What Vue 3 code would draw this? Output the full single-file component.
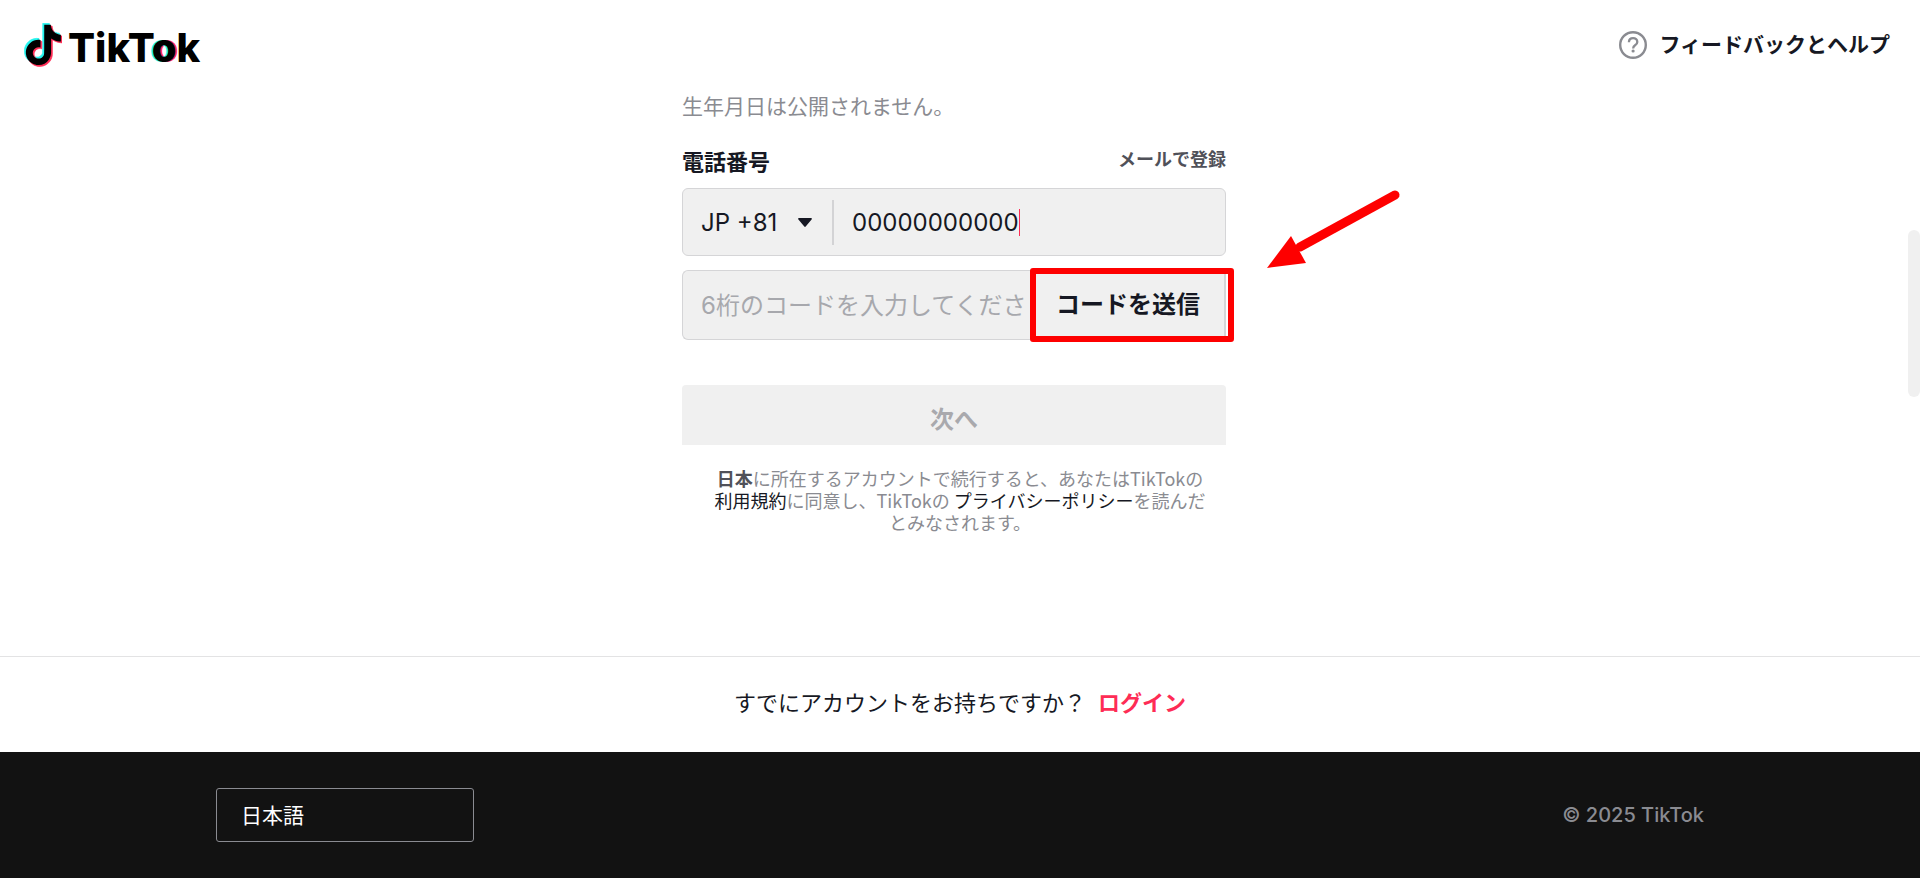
<script setup>
import { computed, ref } from 'vue'

const phone = ref('00000000000')
const code = ref('')
const country = ref('JP +81')
const language = ref('ja')
const phoneWidth = computed(() => `${Math.max(phone.value.length, 1)}ch`)

const notePath =
  'M12.525.02c1.31-.02 2.61-.01 3.91-.02.08 1.53.63 3.09 1.75 4.17 1.12 1.11 2.7 1.62 4.24 1.79v4.03c-1.44-.05-2.89-.35-4.2-.97-.57-.26-1.1-.59-1.62-.93-.01 2.92.01 5.84-.02 8.75-.08 1.4-.54 2.79-1.35 3.94-1.31 1.92-3.58 3.17-5.91 3.21-1.43.08-2.86-.31-4.08-1.03-2.02-1.19-3.44-3.37-3.65-5.71-.02-.5-.03-1-.01-1.49.18-1.9 1.12-3.72 2.58-4.96 1.66-1.44 3.98-2.13 6.15-1.72.02 1.48-.04 2.96-.04 4.44-.99-.32-2.15-.23-3.02.37-.63.41-1.11 1.04-1.36 1.75-.21.51-.15 1.07-.14 1.61.24 1.64 1.82 3.02 3.5 2.87 1.12-.01 2.19-.66 2.77-1.61.19-.33.4-.67.41-1.06.1-1.79.06-3.57.07-5.36.01-4.03-.01-8.05.02-12.07z'
</script>

<template>
  <div class="page">
    <header class="header">
      <a class="logo" href="#" aria-label="TikTok">
        <svg class="note" viewBox="0 0 38 44" aria-hidden="true">
          <path :d="notePath" fill="#25f4ee" stroke="#25f4ee" stroke-width=".4" transform="translate(-2.300 .3) scale(1.680)" />
          <path :d="notePath" fill="#fe2c55" stroke="#fe2c55" stroke-width=".4" transform="translate(.5 3.100) scale(1.680)" />
          <path :d="notePath" fill="#000" transform="translate(-.8 1.800) scale(1.680)" />
        </svg>
        <span class="wordmark">TikT<span class="wordmark-o">o</span>k</span>
      </a>
      <a class="help" href="#">
        <svg class="help-icon" viewBox="0 0 28 28" fill="none" aria-hidden="true">
          <circle cx="14" cy="14" r="12.8" stroke="#8a8b91" stroke-width="2.4" />
          <path d="M9.9 11.2c.1-2.4 1.8-4 4.2-4s4.200 1.500 4.200 3.700c0 1.500-.8 2.400-2.200 3.400-1.300.9-1.900 1.500-1.900 2.900v.3" stroke="#8a8b91" stroke-width="2.300" />
          <circle cx="14.100" cy="20" r="1.600" fill="#8a8b91" />
        </svg>
        <span>フィードバックとヘルプ</span>
      </a>
    </header>

    <main class="main">
      <form class="form" @submit.prevent>
        <p class="hint">生年月日は公開されません。</p>
        <div class="title-row">
          <label class="title" for="phone">電話番号</label>
          <a class="switch" href="#">メールで登録</a>
        </div>

        <div class="field">
          <div class="country">
            <select v-model="country" class="country-select" aria-label="国コード">
              <option>JP +81</option>
            </select>
            <svg class="caret-down" viewBox="0 0 14 9" aria-hidden="true">
              <path d="M1 0h12c.9 0 1.200.9.6 1.500L7.700 8.600c-.4.4-1 .4-1.400 0L.4 1.500C-.2.900.1 0 1 0z" fill="#161823" />
            </svg>
          </div>
          <span class="divider"></span>
          <input id="phone" v-model="phone" class="phone" :style="{ width: phoneWidth }" type="tel" />
          <span class="cursor"></span>
        </div>

        <div class="code-row">
          <input v-model="code" class="code" type="text" placeholder="6桁のコードを入力してください" aria-label="6桁のコード" />
          <button class="send" type="button">コードを送信</button>
          <span class="highlight"></span>
          <svg class="arrow" viewBox="0 0 136 82" aria-hidden="true">
            <path d="M129 8L34 60" stroke="#fe0000" stroke-width="9" stroke-linecap="round" />
            <path d="M1 81L25 49L40 76z" fill="#fe0000" />
          </svg>
        </div>

        <button class="next" type="submit" disabled>次へ</button>

        <p class="terms">
          <b>日本</b>に所在するアカウントで続行すると、あなたはTikTokの<a href="#">利用規約</a>に同意し、TikTokの <a href="#">プライバシーポリシー</a>を読んだとみなされます。
        </p>
      </form>
      <span class="scroll-thumb"></span>
    </main>

    <section class="login">
      <span>すでにアカウントをお持ちですか？</span>
      <a href="#">ログイン</a>
    </section>

    <footer class="footer">
      <div class="footer-inner">
        <select v-model="language" class="language" aria-label="言語">
          <option value="ja">日本語</option>
        </select>
        <span class="copyright">© 2025 TikTok</span>
      </div>
    </footer>
  </div>
</template>

<style>
body {
  margin: 0;
}
</style>

<style scoped>
* {
  box-sizing: border-box;
}
.page {
  display: flex;
  flex-direction: column;
  min-height: 100vh;
  background: #fff;
  color: #161823;
  font-family: Inter, 'Noto Sans CJK JP', sans-serif;
  font-size: 22px;
}
a {
  color: inherit;
  text-decoration: none;
}
input,
select,
button {
  margin: 0;
  padding: 0;
  border: 0;
  outline: 0;
  background: none;
  color: inherit;
  font-family: inherit;
  font-size: 24px;
  appearance: none;
}
.header {
  display: flex;
  align-items: center;
  justify-content: space-between;
  height: 90px;
  padding: 0 30px 0 24px;
}
.logo {
  display: flex;
  align-items: center;
  gap: 6px;
}
.note {
  width: 38px;
  height: 44px;
}
.wordmark {
  padding-top: 6px;
  color: #000;
  font-family: Inter, sans-serif;
  font-size: 40px;
  font-weight: 800;
  line-height: 48px;
}
.wordmark-o {
  text-shadow: -2px 0 #25f4ee, 2px 0 #fe2c55;
}
.help {
  display: flex;
  align-items: center;
  gap: 12px;
  font-size: 21px;
  font-weight: 700;
  line-height: 32px;
}
.help-icon {
  width: 28px;
  height: 28px;
}
.main {
  position: relative;
  flex: 1;
  padding: 2px 12px 48px 0;
}
.form {
  width: 544px;
  max-width: 100%;
  margin: 0 auto;
}
.hint {
  margin: 0 0 24px;
  color: #8a8b91;
  font-size: 21px;
  line-height: 30px;
}
.title-row {
  display: flex;
  align-items: flex-start;
  justify-content: space-between;
  margin-bottom: 10px;
}
.title {
  font-weight: 700;
  line-height: 32px;
}
.switch {
  color: #505159;
  font-size: 18px;
  font-weight: 700;
  line-height: 28px;
}
.field {
  display: flex;
  align-items: center;
  height: 68px;
  margin-bottom: 14px;
  padding: 0 18px;
  border: 1px solid #d5d5d7;
  border-radius: 6px;
  background: #f0f0f0;
}
.country {
  display: flex;
  align-items: center;
  gap: 20px;
}
.caret-down {
  width: 14px;
  height: 9px;
}
.divider {
  width: 2px;
  height: 45px;
  margin: 0 18px 0 20px;
  background: #d3d3d5;
}
.phone {
  height: 40px;
}
.cursor {
  width: 1px;
  height: 27px;
  background: #fe2c55;
}
.code-row {
  position: relative;
  display: flex;
  height: 70px;
  margin-bottom: 45px;
}
.code {
  flex: 1;
  min-width: 0;
  padding: 0 6px 0 18px;
  border: 1px solid #d5d5d7;
  border-right: 0;
  border-radius: 6px 0 0 6px;
  background: #f0f0f0;
}
.code::placeholder {
  color: #a7a8ad;
  opacity: 1;
}
.send {
  width: 196px;
  padding: 0 0 6px 2px;
  border: 1px solid #d5d5d7;
  border-right-width: 2px;
  border-left: 0;
  background: #f0f0f0;
  font-weight: 700;
}
.highlight {
  position: absolute;
  inset: -2px -8px -2px auto;
  width: 204px;
  border: 6px solid #fe0000;
  border-radius: 3px;
  pointer-events: none;
}
.arrow {
  position: absolute;
  bottom: 71px;
  left: calc(100% + 40px);
  width: 136px;
  height: 82px;
}
.next {
  display: block;
  width: 100%;
  height: 60px;
  padding-top: 4px;
  border-radius: 4px 4px 0 0;
  background: #f0f0f0;
  color: #a9a9ad;
  font-weight: 700;
}
.terms {
  margin: 22px 0 0;
  padding: 0 18px 0 30px;
  color: #8a8b91;
  font-family: 'Noto Sans CJK JP', sans-serif;
  font-size: 18px;
  line-height: 22px;
  text-align: center;
}
.terms b {
  color: #505159;
  font-weight: 700;
}
.terms a {
  color: #161823;
}
.scroll-thumb {
  position: absolute;
  top: 140px;
  right: 0;
  width: 12px;
  height: 167px;
  border-radius: 6px;
  background: #f0f0f0;
}
.login {
  display: flex;
  align-items: center;
  justify-content: center;
  gap: 12px;
  height: 96px;
  padding-bottom: 8px;
  border-top: 1px solid #e3e3e4;
}
.login a {
  color: #fe2c55;
  font-weight: 700;
}
.footer {
  padding: 36px 24px;
  background: #121212;
}
.footer-inner {
  display: flex;
  align-items: center;
  justify-content: space-between;
  max-width: 1488px;
  margin: 0 auto;
}
.language {
  width: 258px;
  height: 54px;
  padding: 0 24px;
  border: 1px solid #8a8b91;
  border-radius: 3px;
  color: #fff;
  font-size: 21px;
}
.copyright {
  color: #8a8b91;
  font-size: 20px;
  font-weight: 500;
}
</style>
